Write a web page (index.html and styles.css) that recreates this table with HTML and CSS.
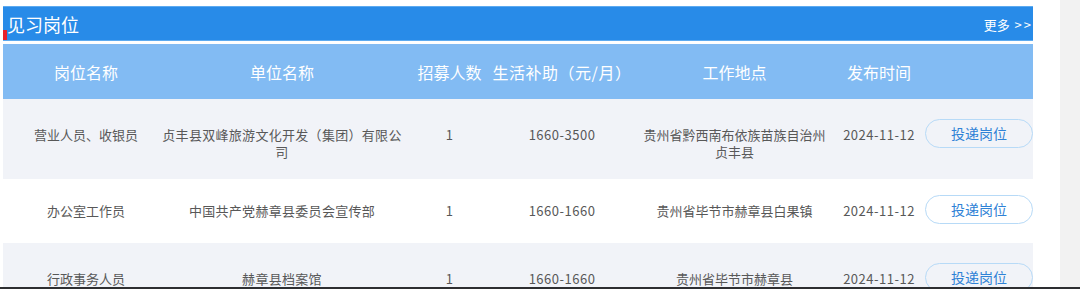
FILE: index.html
```html
<!DOCTYPE html>
<html lang="zh-CN">
<head>
<meta charset="utf-8">
<title>见习岗位</title>
<link rel="stylesheet" href="styles.css">
</head>
<body>
<div class="page">
  <main class="panel">
    <div class="titlebar">
      <h2 class="title">见习岗位</h2>
      <a class="more" href="#">更多 <span class="arrows">&gt;&gt;</span></a>
      <span class="mark"></span>
    </div>
    <div class="table">
      <div class="grid thead">
        <div class="th">岗位名称</div>
        <div class="th">单位名称</div>
        <div class="th">招募人数</div>
        <div class="th th-pay">生活补助（元/月）</div>
        <div class="th">工作地点</div>
        <div class="th">发布时间</div>
        <div class="th"></div>
      </div>
      <div class="grid row alt">
        <div class="cell"><span>营业人员、收银员</span></div>
        <div class="cell c-unit"><span>贞丰县双峰旅游文化开发（集团）有限公司</span></div>
        <div class="cell c-num"><span>1</span></div>
        <div class="cell c-num"><span>1660-3500</span></div>
        <div class="cell c-addr"><span>贵州省黔西南布依族苗族自治州贞丰县</span></div>
        <div class="cell c-num"><span>2024-11-12</span></div>
        <div class="cell c-act"><a class="btn" href="#">投递岗位</a></div>
      </div>
      <div class="grid row row-compact">
        <div class="cell"><span>办公室工作员</span></div>
        <div class="cell c-unit"><span>中国共产党赫章县委员会宣传部</span></div>
        <div class="cell c-num"><span>1</span></div>
        <div class="cell c-num"><span>1660-1660</span></div>
        <div class="cell c-addr"><span>贵州省毕节市赫章县白果镇</span></div>
        <div class="cell c-num"><span>2024-11-12</span></div>
        <div class="cell c-act"><a class="btn" href="#">投递岗位</a></div>
      </div>
      <div class="grid row alt">
        <div class="cell"><span>行政事务人员</span></div>
        <div class="cell c-unit"><span>赫章县档案馆</span></div>
        <div class="cell c-num"><span>1</span></div>
        <div class="cell c-num"><span>1660-1660</span></div>
        <div class="cell c-addr"><span>贵州省毕节市赫章县</span></div>
        <div class="cell c-num"><span>2024-11-12</span></div>
        <div class="cell c-act"><a class="btn" href="#">投递岗位</a></div>
      </div>
    </div>
  </main>
  <div class="scroll-track"></div>
</div>
<div class="bottom-edge"></div>
</body>
</html>
```

FILE: styles.css
```css
* { box-sizing: border-box; }

html, body {
  margin: 0;
  padding: 0;
  width: 1080px;
  height: 289px;
  overflow: hidden;
  background: #ffffff;
  font-family: "Noto Sans CJK SC", "Noto Sans", sans-serif;
}

.page {
  display: flex;
  height: 289px;
}

.panel {
  width: 1030px;
  margin-left: 3px;
  padding-top: 6px;
}

.scroll-track {
  width: 20px;
  height: 289px;
  margin-left: auto;
  background: #f2f2f2;
}

.titlebar {
  position: relative;
  height: 35px;
  display: flex;
  align-items: center;
  justify-content: space-between;
  background: #288be8;
  border-top: 1px solid #5caaf0;
  border-bottom: 1px solid #5caaf0;
  padding: 0 2px 0 4px;
  margin-bottom: 3px;
}

.title {
  margin: 0;
  font-size: 18px;
  font-weight: normal;
  color: #ffffff;
  line-height: 22px;
  padding-top: 1px;
}

.more {
  font-size: 13px;
  color: #ffffff;
  text-decoration: none;
  line-height: 16px;
  padding-top: 2px;
  white-space: nowrap;
}

.arrows {
  letter-spacing: 2px;
  margin-right: -2px;
  margin-left: 2px;
}

.mark {
  position: absolute;
  left: 0;
  bottom: 0;
  width: 4px;
  height: 10px;
  background: #e8202a;
}

.grid {
  display: grid;
  grid-template-columns: 166px 226px 109px 116px 229px 60px 124px;
}

.thead {
  height: 55px;
  background: #82bbf3;
  align-items: center;
}

.th {
  display: flex;
  justify-content: center;
  font-size: 16px;
  color: #ffffff;
  white-space: nowrap;
  line-height: 20px;
}

.th-pay { letter-spacing: 0.5px; }

.row {
  align-items: start;
  padding: 20px 0 19px;
  background: #ffffff;
}

.row.alt { background: #f1f3f8; }

.row-compact { padding-top: 16px; }

.cell {
  display: flex;
  justify-content: center;
  padding-top: 7px;
  font-size: 13px;
  line-height: 17px;
  color: #585858;
  text-align: center;
  white-space: nowrap;
}

.cell > span { flex-shrink: 0; }

.c-num > span { letter-spacing: 0.5px; }

.c-unit > span {
  white-space: normal;
  max-width: 240px;
  letter-spacing: 0.3px;
}

.c-addr > span {
  white-space: normal;
  max-width: 188px;
}

.c-act {
  justify-content: flex-end;
  padding-top: 0;
}

.btn {
  display: block;
  width: 108px;
  height: 29px;
  border: 1px solid #b7daf7;
  border-radius: 15px;
  color: #2f82d6;
  font-size: 14px;
  line-height: 27px;
  text-align: center;
  text-decoration: none;
}

.bottom-edge {
  position: fixed;
  left: 0;
  right: 0;
  bottom: 0;
  height: 2px;
  background: #2d2e31;
}
```
